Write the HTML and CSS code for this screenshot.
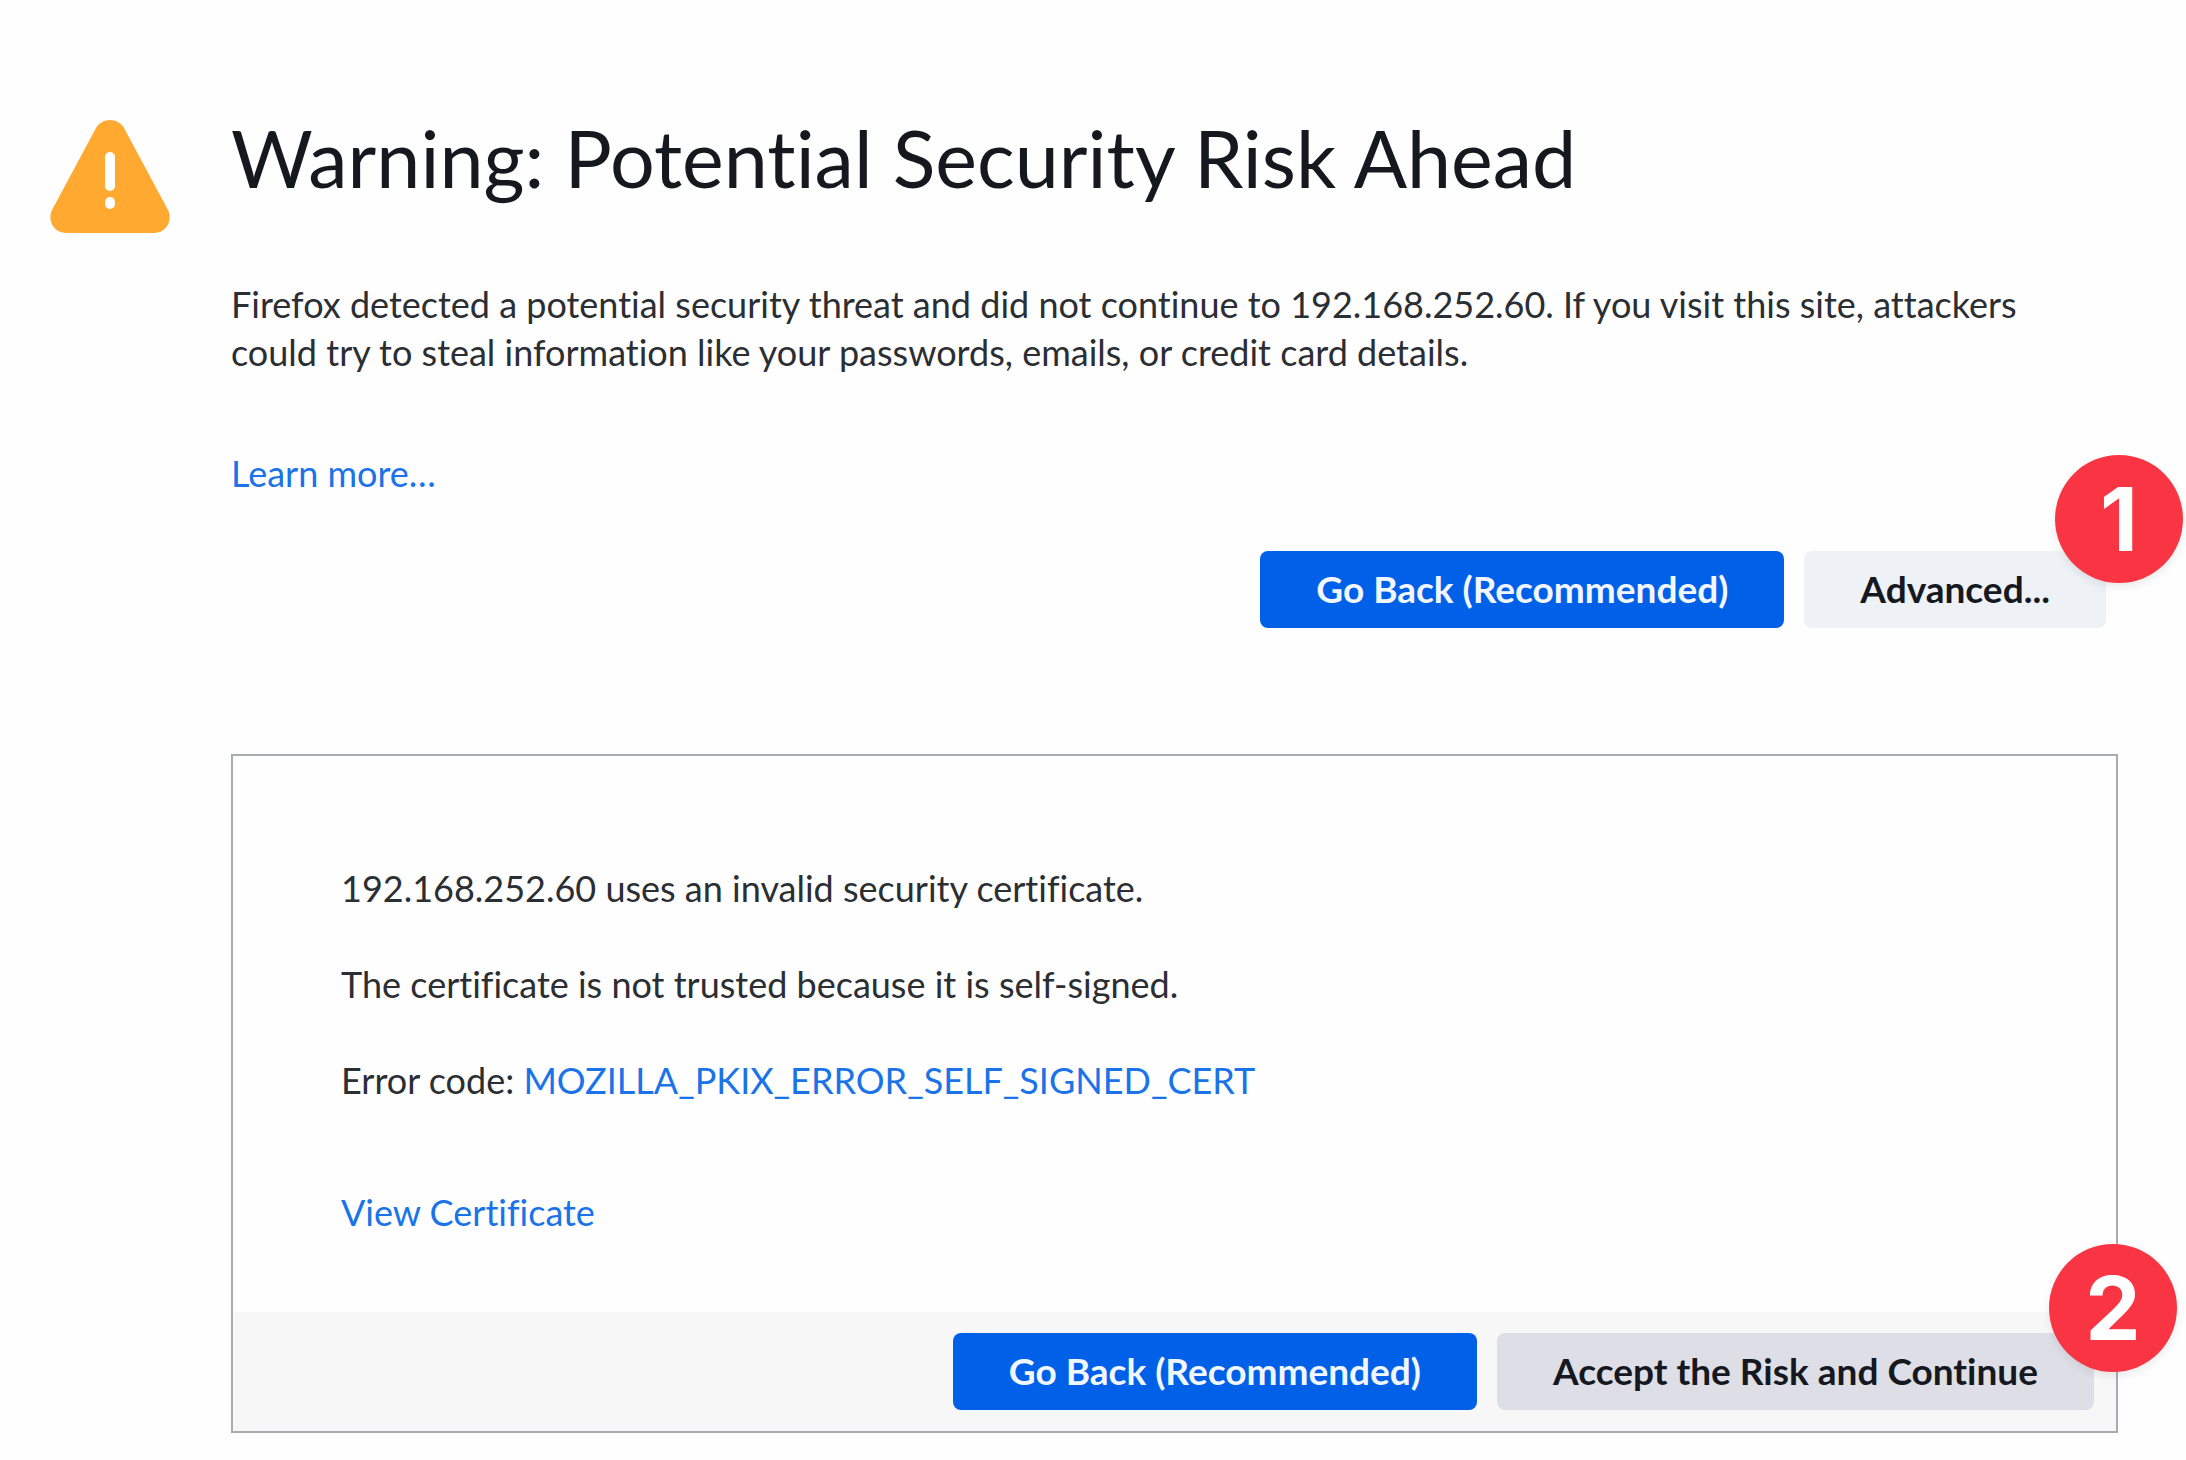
FILE: index.html
```html
<!DOCTYPE html>
<html lang="en">
<head>
<meta charset="utf-8">
<meta name="viewport" content="width=device-width, initial-scale=1">
<title>Warning: Potential Security Risk Ahead</title>
<link rel="stylesheet" href="styles.css">
</head>
<body>
<main class="page">
  <svg class="warning-icon" viewBox="0 0 120 113" aria-hidden="true">
    <path fill="#ffa931" d="M60 0c6 0 11 3 14 8l44 82c5 11-2 23-14 23H16C4 113-3 101 2 90L46 8c3-5 8-8 14-8z"/>
    <rect x="55" y="32" width="10" height="39" rx="5" fill="#fff"/>
    <rect x="55" y="77" width="10" height="12" rx="5" fill="#fff"/>
  </svg>
  <div class="content">
    <h1 class="title">Warning: Potential Security Risk Ahead</h1>
    <p class="summary">Firefox detected a potential security threat and did not continue to 192.168.252.60. If you visit this site, attackers could try to steal information like your passwords, emails, or credit card details.</p>
    <a class="link learn-more" href="#learn-more">Learn more…</a>
    <div class="actions">
      <button class="button primary" type="button">Go Back (Recommended)</button>
      <div class="step step-one">
        <button class="button light" type="button">Advanced...</button>
        <span class="badge">1</span>
      </div>
    </div>
    <section class="panel">
      <div class="details">
        <p>192.168.252.60 uses an invalid security certificate.</p>
        <p>The certificate is not trusted because it is self-signed.</p>
        <p>Error code: <a class="link" href="#error-code">MOZILLA_PKIX_ERROR_SELF_SIGNED_CERT</a></p>
        <a class="link view-certificate" href="#certificate">View Certificate</a>
      </div>
      <div class="panel-actions">
        <button class="button primary" type="button">Go Back (Recommended)</button>
        <div class="step step-two">
          <button class="button neutral" type="button">Accept the Risk and Continue</button>
          <span class="badge">2</span>
        </div>
      </div>
    </section>
  </div>
</main>
</body>
</html>
```
FILE: styles.css
```css
* {
  box-sizing: border-box;
}

body {
  margin: 0;
  background: #fefefe;
  color: #2b2e33;
  font-family: Lato, "Noto Sans", sans-serif;
  font-size: 36px;
  font-variant-ligatures: none;
  line-height: 48px;
}

h1,
p {
  margin: 0;
}

.page {
  display: flex;
  align-items: flex-start;
  gap: 61px;
  padding: 110px 68px 24px 50px;
}

.warning-icon {
  flex: none;
  width: 120px;
  height: 113px;
  margin-top: 10px;
}

.content {
  flex: 1;
  min-width: 0;
}

.title {
  color: #15191f;
  font-size: 79px;
  font-weight: 400;
  line-height: 96px;
}

.summary {
  max-width: 1840px;
  margin-top: 74px;
}

.link {
  color: #1a73e8;
  text-decoration: none;
}

.learn-more {
  display: block;
  width: fit-content;
  margin-top: 73px;
}

.actions {
  display: flex;
  justify-content: flex-end;
  gap: 20px;
  margin-top: 54px;
  padding-right: 12px;
}

.button {
  height: 77px;
  padding: 0 56px 2px;
  border: 0;
  border-radius: 8px;
  color: #15191f;
  font: inherit;
  font-size: 37px;
  font-weight: 700;
  white-space: nowrap;
}

.primary {
  background: #0061e8;
  color: #f2f7ff;
}

.light {
  background: #eef1f6;
}

.neutral {
  background: #dedee6;
}

.step {
  position: relative;
}

.badge {
  position: absolute;
  width: 128px;
  height: 128px;
  border-radius: 50%;
  background: #fa3543;
  box-shadow: 0 4px 8px rgba(0, 0, 0, 0.08);
  color: #fff;
  font-family: Inter, sans-serif;
  font-size: 88px;
  font-weight: 700;
  line-height: 128px;
  text-align: center;
}

.step-one .badge {
  top: -96px;
  right: -77px;
}

.step-two .badge {
  top: -89px;
  right: -83px;
}

.panel {
  margin-top: 126px;
  border: 2px solid #a8acb2;
}

.details {
  display: flex;
  flex-direction: column;
  align-items: flex-start;
  gap: 48px;
  padding: 108px 108px 76px;
}

.view-certificate {
  margin-top: 36px;
}

.panel-actions {
  display: flex;
  justify-content: flex-end;
  gap: 20px;
  padding: 21px 22px;
  background: #f7f7f7;
}
```
